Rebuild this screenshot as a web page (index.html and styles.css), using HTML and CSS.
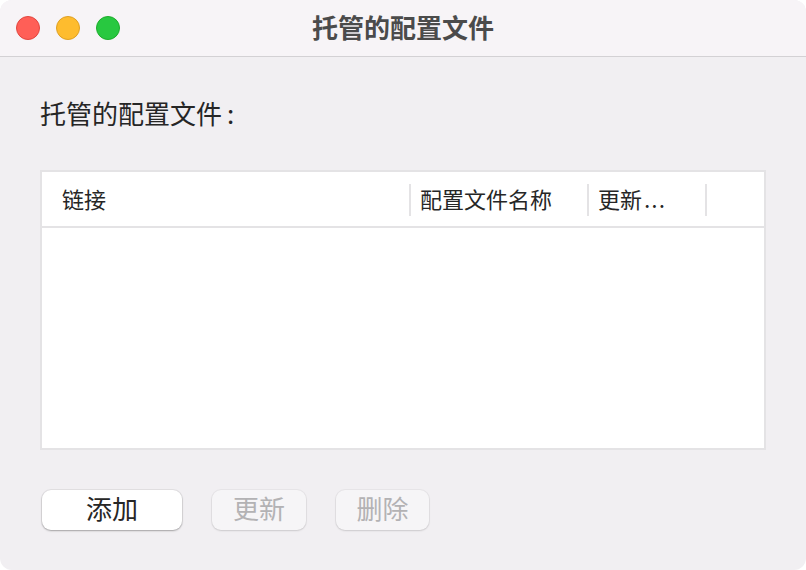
FILE: index.html
```html
<!DOCTYPE html>
<html lang="zh-CN">
<head>
<meta charset="utf-8">
<title>托管的配置文件</title>
<link rel="stylesheet" href="styles.css">
</head>
<body>
<div class="window">
  <div class="titlebar">
    <div class="lights">
      <span class="light red"></span>
      <span class="light yellow"></span>
      <span class="light green"></span>
    </div>
    <div class="title">托管的配置文件</div>
    <div class="spacer"></div>
  </div>
  <div class="content">
    <div class="label">托管的配置文件<span class="colon">:</span></div>
    <div class="table">
      <div class="thead">
        <div class="col col-link">链接</div>
        <div class="col col-name"><span class="sep"></span>配置文件名称</div>
        <div class="col col-upd"><span class="sep"></span>更新<span class="ell">...</span></div>
        <div class="col col-rest"><span class="sep"></span></div>
      </div>
      <div class="tbody"></div>
    </div>
    <div class="buttons">
      <button class="btn btn-add">添加</button>
      <button class="btn btn-dis">更新</button>
      <button class="btn btn-dis">删除</button>
    </div>
  </div>
</div>
</body>
</html>
```

FILE: styles.css
```css
html, body {
  margin: 0;
  padding: 0;
  background: #ffffff;
}
body {
  font-family: "Noto Sans CJK SC", "Noto Sans", sans-serif;
  color: #262626;
}
.window {
  width: 806px;
  height: 570px;
  background: #f1eff2;
  border-radius: 12px;
  overflow: hidden;
  display: flex;
  flex-direction: column;
}
.titlebar {
  height: 56px;
  flex: none;
  background: #f7f4f7;
  border-bottom: 1px solid #d3d1d4;
  display: grid;
  grid-template-columns: 1fr auto 1fr;
  align-items: center;
}
.lights {
  display: flex;
  gap: 16px;
  padding-left: 16px;
}
.light {
  width: 22px;
  height: 22px;
  border-radius: 50%;
  border: 1px solid transparent;
}
.red { background: #ff5f57; border-color: #e2463f; }
.yellow { background: #febc2e; border-color: #dfa023; }
.green { background: #28c840; border-color: #1dad2b; }
.title {
  font-size: 26px;
  font-weight: bold;
  color: #4b4b4b;
  line-height: 30px;
  margin-top: -3px;
}
.content {
  padding: 0 40px;
  display: flex;
  flex-direction: column;
}
.label {
  margin-top: 38px;
  font-size: 26px;
  line-height: 36px;
  color: #262626;
}
.colon {
  margin-left: 5px;
}
.table {
  margin-top: 39px;
  height: 276px;
  border: 2px solid #e4e3e5;
  background: #ffffff;
  display: flex;
  flex-direction: column;
}
.thead {
  height: 54px;
  flex: none;
  border-bottom: 2px solid #e4e3e5;
  display: flex;
  align-items: center;
  font-size: 22px;
  color: #262626;
}
.col {
  position: relative;
  height: 54px;
  line-height: 52px;
  box-sizing: border-box;
  white-space: nowrap;
}
.col-link { width: 367px; padding-left: 20px; }
.col-name { width: 178px; padding-left: 11px; }
.col-upd { width: 118px; padding-left: 11px; }
.col-rest { flex: 1; }
.sep {
  position: absolute;
  left: 0;
  top: 12px;
  width: 2px;
  height: 32px;
  background: #e4e3e5;
}
.ell {
  font-family: "Inter", "Noto Sans", sans-serif;
  letter-spacing: 1px;
  margin-left: 2px;
}
.tbody { flex: 1; }
.buttons {
  margin-top: 40px;
  display: flex;
  gap: 30px;
  padding-left: 2px;
}
.btn {
  height: 40px;
  border: none;
  border-radius: 9px;
  font-family: "Noto Sans CJK SC", "Noto Sans", sans-serif;
  font-size: 26px;
  line-height: 36px;
  padding: 0 0 4px;
}
.btn-add {
  width: 140px;
  background: #ffffff;
  color: #262626;
  box-shadow: 0 0 0 1px rgba(0,0,0,0.06), 0 1px 2px rgba(0,0,0,0.28);
}
.btn-dis {
  width: 94px;
  background: #f6f5f7;
  color: #b3b2b4;
  box-shadow: 0 0 0 1px rgba(0,0,0,0.04), 0 1px 2px rgba(0,0,0,0.12);
}
.btn-dis + .btn-dis { width: 93px; }
```
